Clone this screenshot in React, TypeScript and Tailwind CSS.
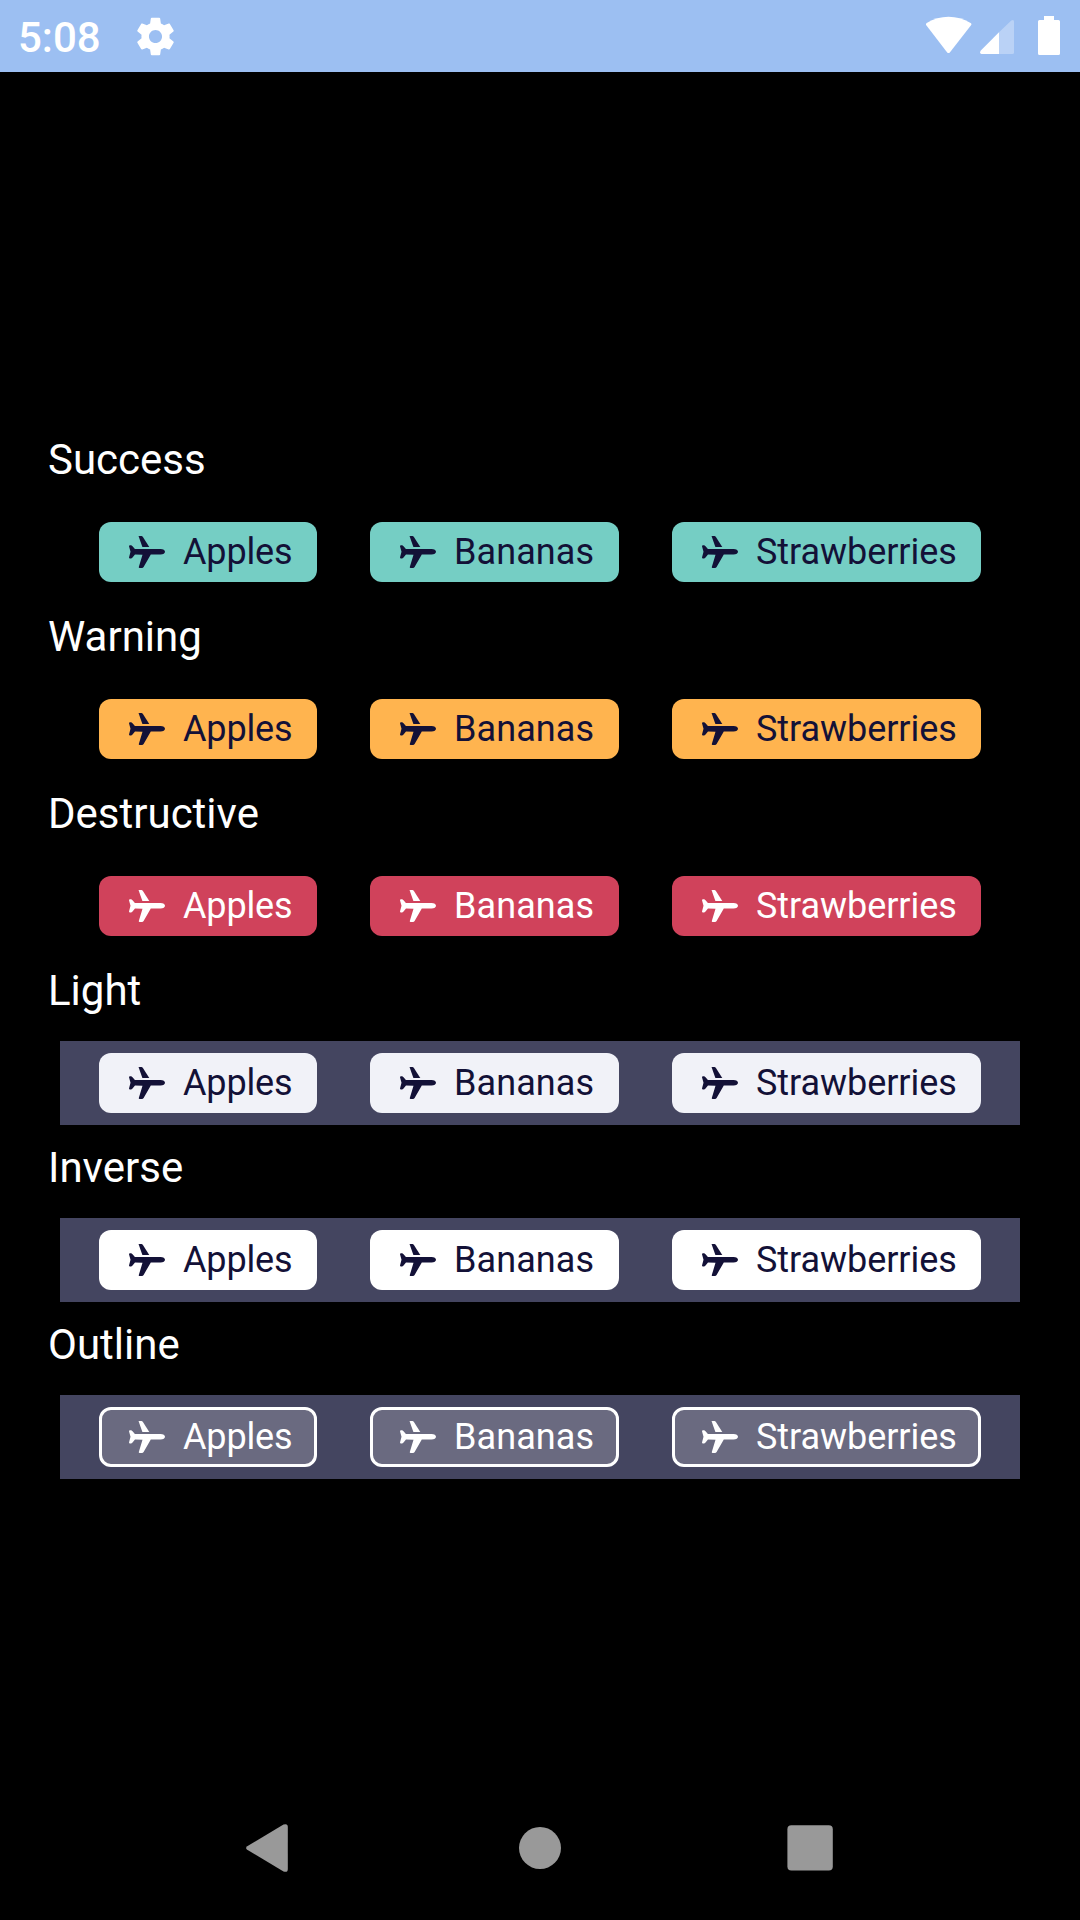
type Variant = { name: string; band: string; chip: string };

const variants: Variant[] = [
  { name: "Success", band: "", chip: "pl-[30px] bg-[#75cec4] text-[#131137]" },
  { name: "Warning", band: "", chip: "pl-[30px] bg-[#ffb44f] text-[#131137]" },
  { name: "Destructive", band: "", chip: "pl-[30px] bg-[#d0425b] text-white" },
  { name: "Light", band: "bg-[#444560]", chip: "pl-[30px] bg-[#f1f2f8] text-[#131137]" },
  { name: "Inverse", band: "bg-[#444560]", chip: "pl-[30px] bg-white text-[#131137]" },
  { name: "Outline", band: "bg-[#444560]", chip: "pl-[27px] bg-[#6a6a80] text-white border-[3px] border-white" },
];

const fruits = [
  { label: "Apples", width: "w-[218px] tracking-[-0.15px]" },
  { label: "Bananas", width: "w-[249px] tracking-[0.08px]" },
  { label: "Strawberries", width: "w-[309px] tracking-[-0.06px]" },
];

function Plane() {
  return (
    <svg width="36" height="32" viewBox="0 0 36 32" fill="currentColor" className="shrink-0">
      <path d="M9.7 0.6C9.6 0.2 9.9 0 10.3 0h2.2c.6 0 1 .3 1.4.9L20.3 11H13.4z" />
      <path d="M0 10.2c0-.6.4-.9 1-.9h.9c.6 0 1 .2 1.4.7L5.9 13H31.500c2.800 0 4.500 1.200 4.500 2.700s-1.700 2.700-4.500 2.700H21.800L14.600 30.900c-.5.7-.9 1-1.600 1h-2.600c-.6 0-.8-.3-.6-.8L13.500 18.700 6 18.400 3.300 21.700c-.4.5-.8.7-1.400.7H1c-.6 0-1-.3-1-.9L1.500 15.700z" />
    </svg>
  );
}

function Badge({ label, width, chip }: { label: string; width: string; chip: string }) {
  return (
    <div className={`flex h-[60px] items-center gap-[18px] rounded-[12px] ${width} ${chip}`}>
      <Plane />
      <span className="text-[36px] leading-[42px] whitespace-nowrap">{label}</span>
    </div>
  );
}

function StatusBar() {
  return (
    <header className="flex h-[72px] items-center bg-[#9cbff2] pl-[18px] pr-[20px] text-white">
      <span className="w-[114.5px] pt-[4px] text-[42px] leading-[50px] font-medium">5:08</span>
      <svg width="45" height="45" viewBox="0 0 24 24" fill="currentColor">
        <path d="M19.430 12.980c.04-.32.07-.64.07-.98s-.03-.66-.07-.98l2.110-1.650c.19-.15.24-.42.12-.64l-2-3.460c-.12-.22-.39-.3-.61-.22l-2.490 1c-.52-.4-1.080-.73-1.690-.98l-.38-2.650C14.460 2.180 14.250 2 14 2h-4c-.25 0-.46.18-.49.42l-.38 2.650c-.61.25-1.170.59-1.690.98l-2.490-1c-.23-.09-.49 0-.61.22l-2 3.460c-.13.22-.07.49.12.64l2.110 1.650c-.04.32-.07.65-.07.98s.03.66.07.98l-2.110 1.650c-.19.15-.24.42-.12.64l2 3.460c.12.22.39.3.61.22l2.490-1c.52.4 1.080.73 1.690.98l.38 2.650c.03.24.24.42.49.42h4c.25 0 .46-.18.49-.42l.38-2.650c.61-.25 1.170-.59 1.690-.98l2.490 1c.23.09.49 0 .61-.22l2-3.460c.12-.22.07-.49-.12-.64l-2.110-1.650zM12 15.500c-1.930 0-3.500-1.570-3.500-3.500s1.570-3.500 3.500-3.500 3.500 1.570 3.500 3.500-1.570 3.500-3.500 3.500z" />
      </svg>
      <div className="ml-auto flex items-center">
        <svg width="46" height="40" viewBox="0 0 46 40" fill="currentColor">
          <path d="M.3 9.300Q-.6 8 .7 7C14-1.200 31-1.200 44.600 7q1.400 1 .4 2.300L24 36.200q-1.500 1.700-3 0z" />
        </svg>
        <svg width="34" height="40" viewBox="0 0 34 40" fill="currentColor" className="ml-[8px]">
          <path d="M19 16.300 31.300 4.400Q34 3 34 5.500V36.500Q34 38 32.500 38H19z" opacity=".3" />
          <path d="M19 16.300V38H1.500Q-.7 37.500.6 34.700z" />
        </svg>
        <svg width="22" height="40" viewBox="0 0 22 40" fill="currentColor" className="ml-[24px]">
          <path d="M6 0H16V4H20.500Q22 4 22 5.500V37.500Q22 39 20.500 39H1.500Q0 39 0 37.500V5.500Q0 4 1.500 4H6z" />
        </svg>
      </div>
    </header>
  );
}

export default function App() {
  return (
    <div className="flex h-[1920px] w-[1080px] flex-col bg-black font-['Roboto',sans-serif] text-white">
      <StatusBar />
      <main className="flex flex-1 flex-col pt-[345px]">
        {variants.map((v) => (
          <section key={v.name} className="flex flex-col">
            <h2 className="flex h-[93px] items-start pt-[18px] pl-[48px] text-[42px] leading-[49px] font-normal">
              {v.name}
            </h2>
            <div className={`mx-[60px] flex h-[84px] items-center gap-[53px] px-[39px] ${v.band}`}>
              {fruits.map((f) => (
                <Badge key={f.label} label={f.label} width={f.width} chip={v.chip} />
              ))}
            </div>
          </section>
        ))}
      </main>
      <nav className="flex h-[144px] items-center justify-center text-[#999999]">
        <div className="flex w-[270px] justify-center">
          <svg width="48" height="48" viewBox="0 0 48 48" fill="currentColor">
            <path d="M1.200 22.200 37.500.6Q41.800-1 41.800 3V45Q41.800 49 37.500 47.400L1.200 25.800Q-1 24 1.200 22.200z" />
          </svg>
        </div>
        <div className="flex w-[270px] justify-center">
          <div className="size-[42px] rounded-full bg-[#999999]" />
        </div>
        <div className="flex w-[270px] justify-center">
          <svg width="48" height="48" viewBox="0 0 48 48" fill="currentColor">
            <rect x="1.4" y="1.2" width="45.400" height="45.400" rx="4" />
          </svg>
        </div>
      </nav>
    </div>
  );
}
